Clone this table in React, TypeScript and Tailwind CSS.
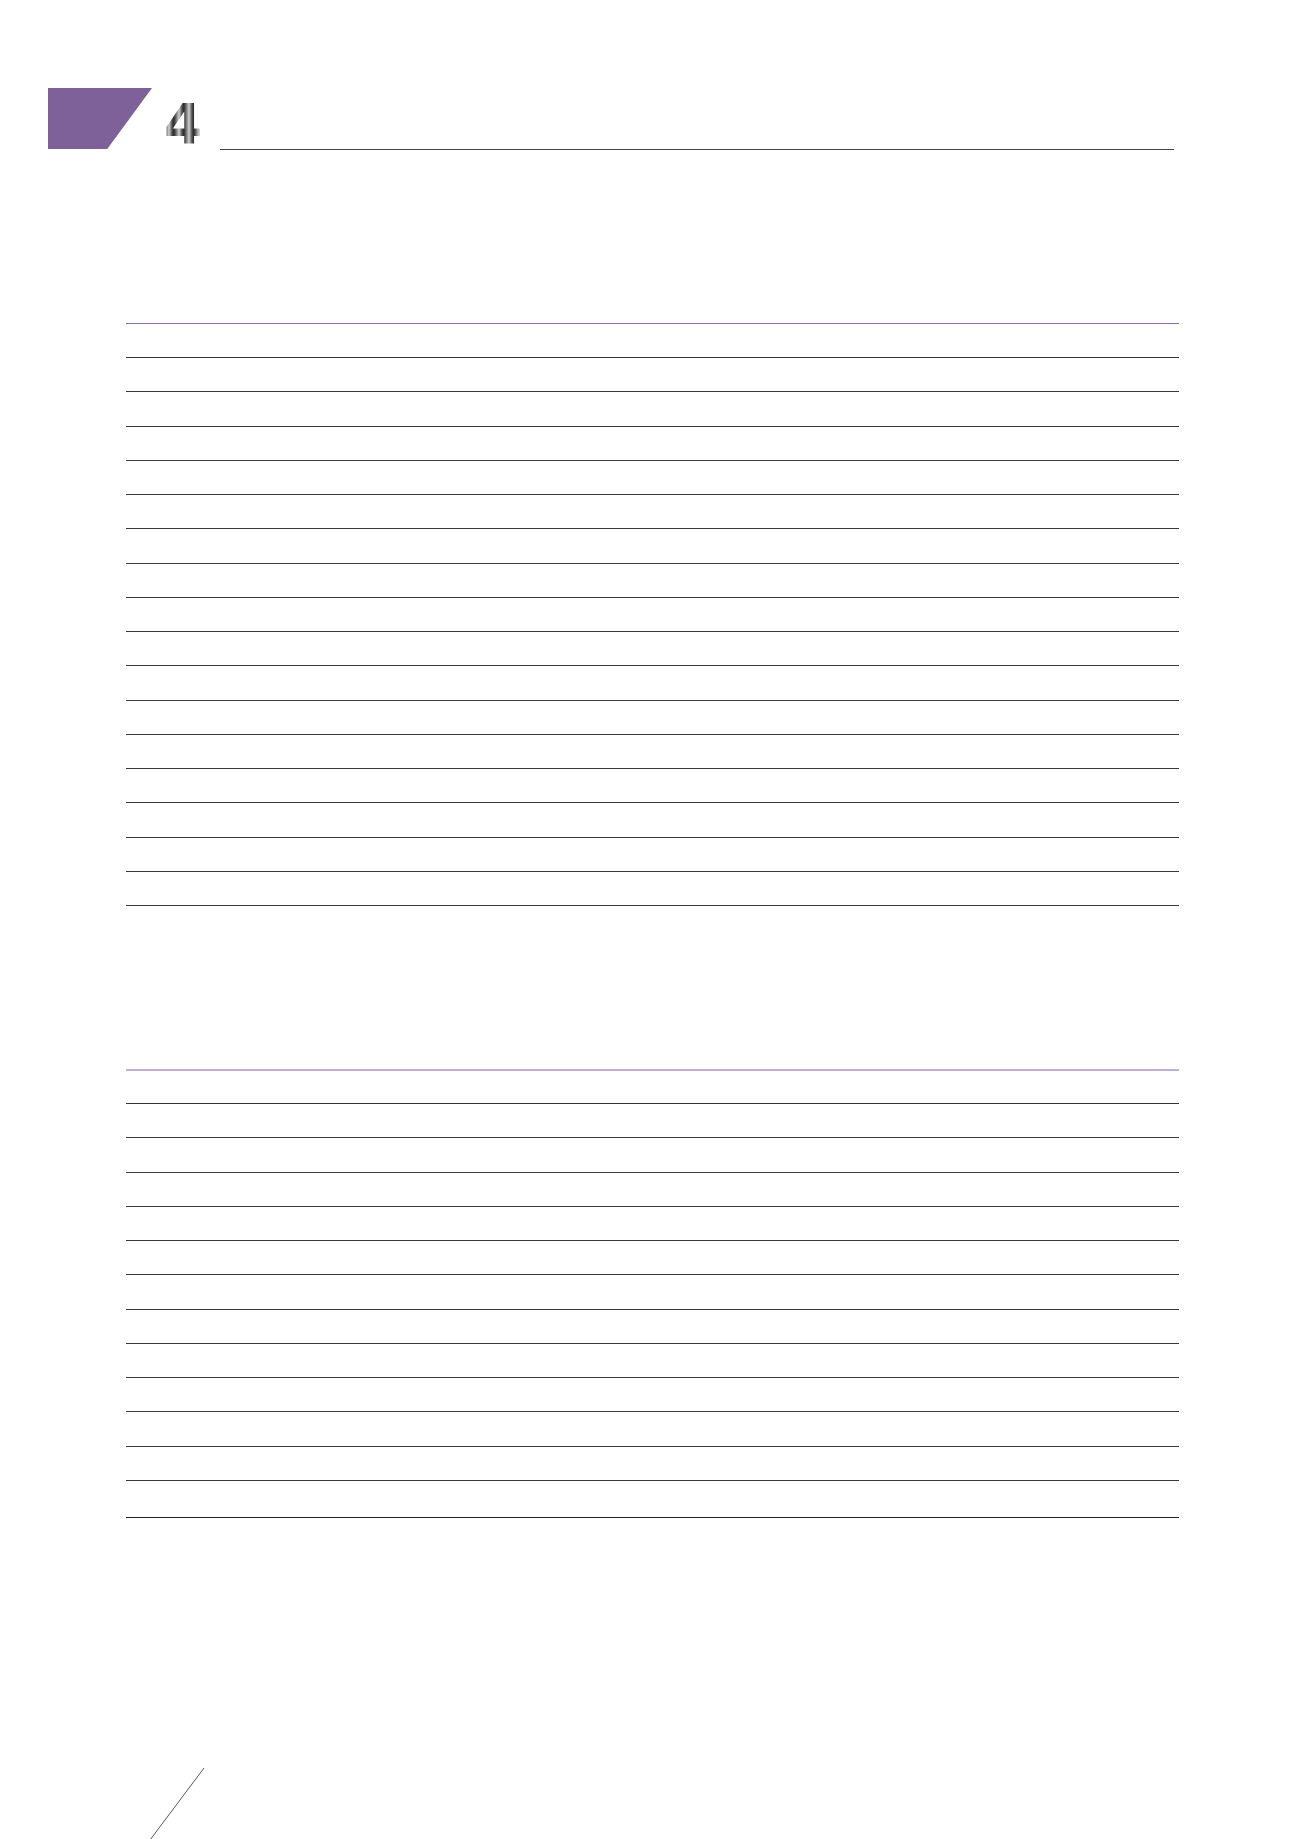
const COLS = ['w-[373px]', 'w-[186px]', 'w-[151px]', 'w-[170px]', 'flex-1'];

function Row({ height, last }: { height: string; last?: boolean }) {
  return (
    <div className={`flex ${height} border-b ${last ? 'border-[#222]' : 'border-[#3a3a3a]'}`}>
      {COLS.map((c, i) => (
        <div key={i} className={c} />
      ))}
    </div>
  );
}

function LineTable({ rows, lastTall, headColor }: { rows: number; lastTall?: boolean; headColor: string }) {
  return (
    <div className="mx-[126px] w-[1053px]">
      <div className={`h-[35px] border-t ${headColor} border-b border-b-[#333]`} />
      {Array.from({ length: rows }).map((_, i) => (
        <Row key={i} height="h-[34.25px]" />
      ))}
      {lastTall && <Row height="h-[37.5px]" last />}
    </div>
  );
}

export default function App() {
  return (
    <div className="relative w-[1300px] h-[1839px] bg-white overflow-hidden font-['Liberation_Sans',sans-serif]">
      <header className="flex items-end pt-[88px] pl-[48px] pr-[126px]">
        <div className="w-[104px] h-[61px] bg-[#7f6199] [clip-path:polygon(0_0,100%_0,57%_100%,0_100%)]" />
        <div className="w-[68px] h-[61px] flex items-end justify-start pl-[12px]">
          <span className="inline-block font-['DejaVu_Sans',sans-serif] text-[55px] leading-none font-bold mb-[-3px] text-transparent bg-clip-text bg-[repeating-linear-gradient(90deg,#2e2e2e_0px,#8c8c8c_3px,#d0d0d0_5px,#505050_8px,#262626_10px)]">
            4
          </span>
        </div>
        <div className="flex-1 border-b-[1.5px] border-[#444] mb-[-1px]" />
      </header>

      <div className="pt-[174px]">
        <LineTable rows={16} headColor="border-t-[#8a6aa6]" />
      </div>

      <div className="pt-[163px]">
        <LineTable rows={11} lastTall headColor="border-t-[#c2aed3] border-t-2" />
      </div>

      <svg className="absolute left-[148px] top-[1766px]" width="60" height="76" viewBox="0 0 60 76">
        <line x1="56" y1="2" x2="2" y2="74" stroke="#555" strokeWidth="1" />
      </svg>
    </div>
  );
}
